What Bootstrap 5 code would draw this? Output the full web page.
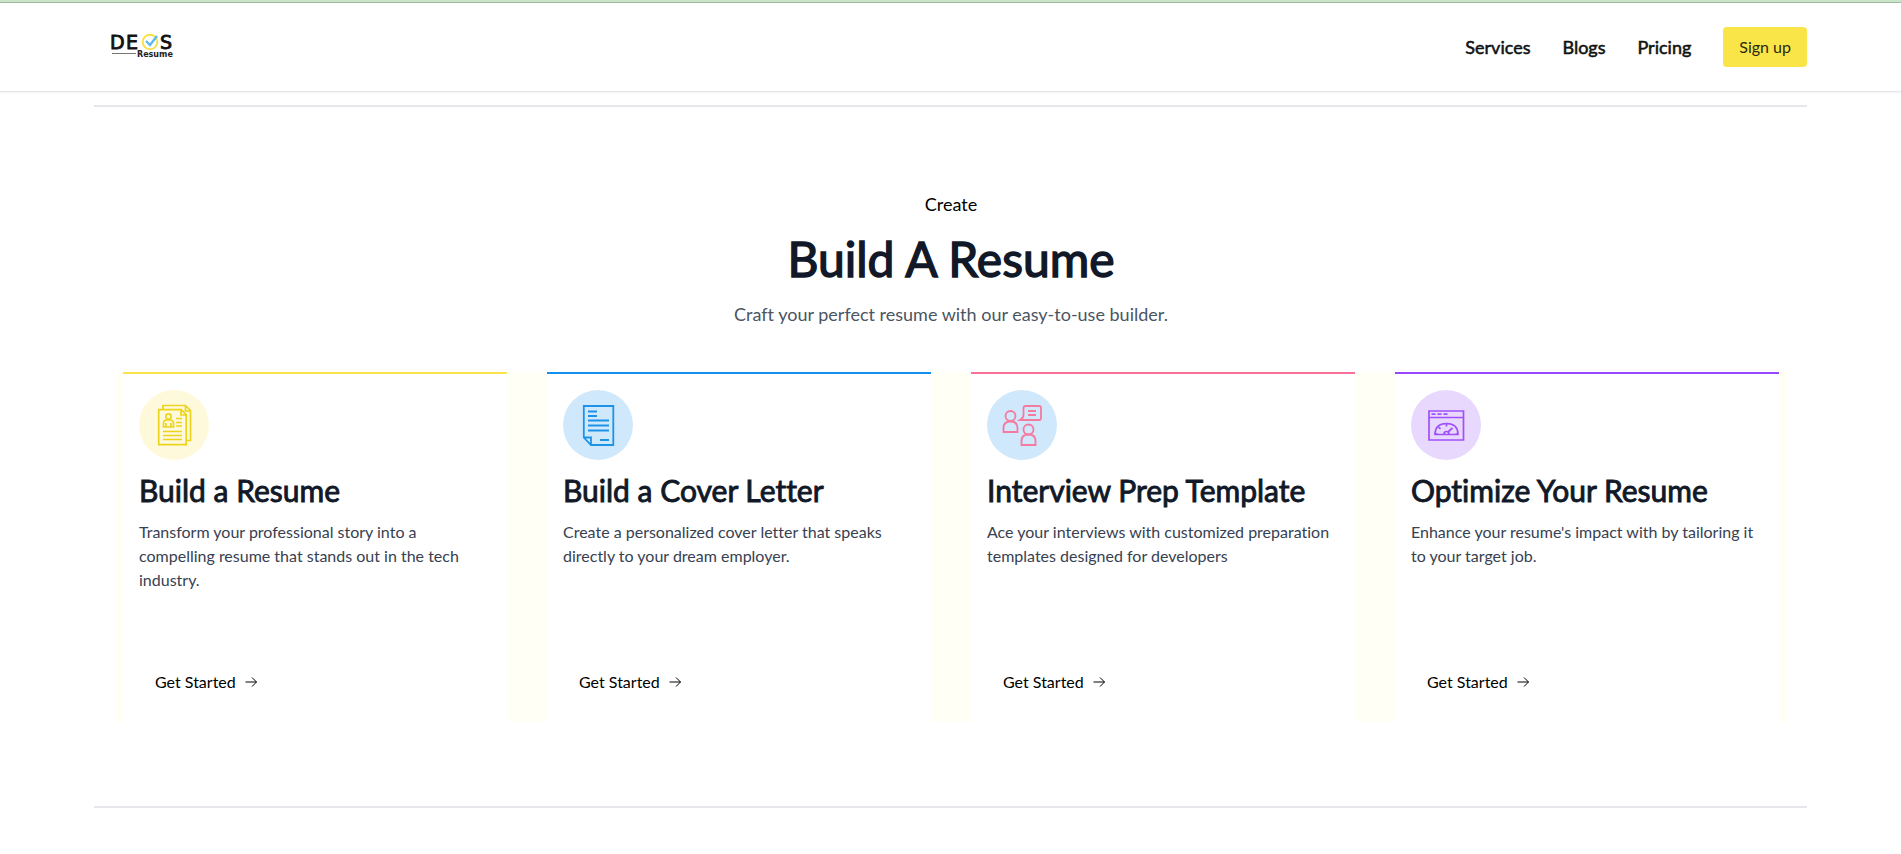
<!DOCTYPE html>
<html lang="en">
<head>
<meta charset="utf-8">
<meta name="viewport" content="width=device-width, initial-scale=1">
<title>Devs Resume</title>
<link href="https://cdn.jsdelivr.net/npm/bootstrap@5.3.0/dist/css/bootstrap.min.css" rel="stylesheet">
<style>
  body { font-family: Lato, sans-serif; font-variant-ligatures: none; color: #000; background: #fff; }
  .top-strip { height: 3px; background: #cbe4cb; border-bottom: 1px solid #9dba9d; }
  .page-gutter { padding-left: 94px; padding-right: 94px; }
  .site-header { height: 89px; border-bottom: 1px solid #e5e7eb; box-shadow: 0 1px 2px rgba(0,0,0,.06); }
  .faux-bold { font-weight: 400; -webkit-text-stroke: 0.03em currentColor; }
  .brand { margin-left: 16px; padding-bottom: 4px; }
  .nav-item-link { font-size: 18px; line-height: 28px; color: #111; text-decoration: none; }
  .nav-links { gap: 32px; }
  .btn-signup { font-size: 16px; line-height: 24px; padding: 8px 16px; border: 0; border-radius: 4px; background: #f9e547; color: #2b2810; }
  .btn-signup:hover { background: #f0da30; }
  .features { margin-top: 13px; border-top: 2px solid #e5e7eb; border-bottom: 2px solid #e5e7eb; padding: 83px 20px 84px 21px; }
  .eyebrow, .subtitle { font-size: 18px; line-height: 28px; }
  .subtitle { color: #4b5563; }
  .main-title { font-size: 48px; line-height: 48px; margin: 17px 0; color: #111827; }
  .cards-band { background: #fffff5; padding: 0 8px; gap: 40px; margin-top: 44px; }
  .tile { flex: 1 1 0; min-width: 240px; min-height: 350px; background: #fff; border-top: 2px solid; padding: 16px 16px 20px; }
  .tile-yellow { border-color: #f9e547; } .tile-blue { border-color: #1590f0; }
  .tile-pink { border-color: #f77199; } .tile-purple { border-color: #9747ff; }
  .disc { width: 70px; height: 70px; }
  .disc svg { width: 70px; height: 70px; fill: none; }
  .disc-yellow { background: #fff9db; color: #edd41c; } .disc-blue { background: #d0e8fb; color: #1d93e8; }
  .disc-pink { background: #d0e8fb; color: #f57aa0; } .disc-purple { background: #e9d8fd; color: #9f50fb; }
  .tile-title { font-size: 30px; line-height: 36px; margin: 12px 0; color: #111827; }
  .tile-text { font-size: 16px; line-height: 24px; color: #374151; }
  .btn-start { font-size: 16px; line-height: 24px; padding: 8px 16px; border: 0; background: transparent; color: #000; }
</style>
</head>
<body>
<div class="top-strip"></div>
<header class="site-header page-gutter d-flex align-items-center justify-content-between">
  <a class="brand d-block" href="#" aria-label="Devs Resume">
    <svg class="d-block" width="64" height="26" viewBox="0 0 64 26">
      <g font-family="DejaVu Sans" font-size="19" fill="#111" stroke="#111" stroke-width=".9">
        <text x="0" y="17">D</text><text x="16" y="17">E</text><text x="50" y="17">S</text>
      </g>
      <circle cx="40" cy="10" r="7.300" fill="none" stroke="#f9e04a" stroke-width="2"/>
      <path d="M36 9l4 4 7-9" fill="none" stroke="#5bb8f0" stroke-width="2.400"/>
      <path d="M2 21.500h24" stroke="#777"/>
      <text x="27" y="25" font-family="DejaVu Sans" font-weight="bold" font-size="8" fill="#222">Resume</text>
    </svg>
  </a>
  <nav class="d-flex align-items-center gap-4" aria-label="Main">
    <div class="nav-links d-flex me-2">
      <a class="nav-item-link faux-bold" href="#">Services</a>
      <a class="nav-item-link faux-bold" href="#">Blogs</a>
      <a class="nav-item-link faux-bold" href="#">Pricing</a>
    </div>
    <button class="btn-signup" type="button">Sign up</button>
  </nav>
</header>

<main class="page-gutter">
  <section class="features">
    <div class="text-center">
      <p class="eyebrow mb-0">Create</p>
      <h1 class="main-title faux-bold">Build A Resume</h1>
      <p class="subtitle mb-0">Craft your perfect resume with our easy-to-use builder.</p>
    </div>

    <div class="cards-band d-flex flex-wrap">
      <article class="tile tile-yellow d-flex flex-column align-items-start">
        <div class="disc disc-yellow rounded-circle">
          <svg viewBox="0 0 70 70" stroke="currentColor" stroke-width="1.700">
            <path d="M19.700 19.700h22.500l5 5v30H19.700zM42 20v5h5M24 19v-3.500h22.500l5 5v30H47.500M46.500 16v5h5"/>
            <circle cx="29.500" cy="26.500" r="2.700"/>
            <path d="M24.500 37v-3.500q0-3.500 3.500-3.500h3q3.500 0 3.500 3.500V37zM27 37v-4M32 37v-4M37 28.500h6M37 32.500h6M37 36h6M24 41.500h19M24 45.500h19M24 49.500h19"/>
          </svg>
        </div>
        <h2 class="tile-title faux-bold">Build a Resume</h2>
        <p class="tile-text mb-0">Transform your professional story into a compelling resume that stands out in the tech industry.</p>
        <button class="btn-start mt-auto d-flex align-items-center gap-2" type="button">Get Started
          <svg width="14" height="14" viewBox="0 0 14 14" fill="none" stroke="currentColor"><path d="M1.500 7h11M8 2.500L12.500 7 8 11.500"/></svg></button>
      </article>

      <article class="tile tile-blue d-flex flex-column align-items-start">
        <div class="disc disc-blue rounded-circle">
          <svg viewBox="0 0 70 70" stroke="currentColor" stroke-width="1.800">
            <path d="M20.800 16h29.500v39H28l-7.200-7.500zM20.800 47.500H28V55M25 21.500h9M25 26h9M25 30.500h21M25 35.500h21M25 40.500h21M37 50h9"/>
          </svg>
        </div>
        <h2 class="tile-title faux-bold">Build a Cover Letter</h2>
        <p class="tile-text mb-0">Create a personalized cover letter that speaks directly to your dream employer.</p>
        <button class="btn-start mt-auto d-flex align-items-center gap-2" type="button">Get Started
          <svg width="14" height="14" viewBox="0 0 14 14" fill="none" stroke="currentColor"><path d="M1.500 7h11M8 2.500L12.500 7 8 11.500"/></svg></button>
      </article>

      <article class="tile tile-pink d-flex flex-column align-items-start">
        <div class="disc disc-pink rounded-circle">
          <svg viewBox="0 0 70 70" stroke="currentColor" stroke-width="1.800">
            <circle cx="23.500" cy="26" r="5"/><path d="M16.500 42v-4q0-6.500 7-6.500t7 6.500v4z"/>
            <circle cx="41.500" cy="39.500" r="5"/><path d="M34.500 55v-4q0-6.500 7-6.500t7 6.500v4z"/>
            <path d="M36.500 18q0-2 2-2H52q2 0 2 2v10q0 2-2 2H33q3.500-2 3.500-5zM41 21h8M41 25h8"/>
          </svg>
        </div>
        <h2 class="tile-title faux-bold">Interview Prep Template</h2>
        <p class="tile-text mb-0">Ace your interviews with customized preparation templates designed for developers</p>
        <button class="btn-start mt-auto d-flex align-items-center gap-2" type="button">Get Started
          <svg width="14" height="14" viewBox="0 0 14 14" fill="none" stroke="currentColor"><path d="M1.500 7h11M8 2.500L12.500 7 8 11.500"/></svg></button>
      </article>

      <article class="tile tile-purple d-flex flex-column align-items-start">
        <div class="disc disc-purple rounded-circle">
          <svg viewBox="0 0 70 70" stroke="currentColor" stroke-width="1.700">
            <path d="M18 21h34.500v29H18zM18 27.500h34.500M20.500 24.200h4M26.500 24.200h4M32.500 24.200h4"/>
            <path d="M24 44.500q0-11 11.500-11t11.500 11zM35.500 33.500v3M27.500 37l2 2M24.500 44h2.500M44.500 44H47M33 44q0-2.500 2.500-2.500T38 44M37 42l4.500-4"/>
          </svg>
        </div>
        <h2 class="tile-title faux-bold">Optimize Your Resume</h2>
        <p class="tile-text mb-0">Enhance your resume's impact with by tailoring it to your target job.</p>
        <button class="btn-start mt-auto d-flex align-items-center gap-2" type="button">Get Started
          <svg width="14" height="14" viewBox="0 0 14 14" fill="none" stroke="currentColor"><path d="M1.500 7h11M8 2.500L12.500 7 8 11.500"/></svg></button>
      </article>
    </div>
  </section>
</main>
<script src="https://cdn.jsdelivr.net/npm/bootstrap@5.3.0/dist/js/bootstrap.bundle.min.js"></script>
</body>
</html>
